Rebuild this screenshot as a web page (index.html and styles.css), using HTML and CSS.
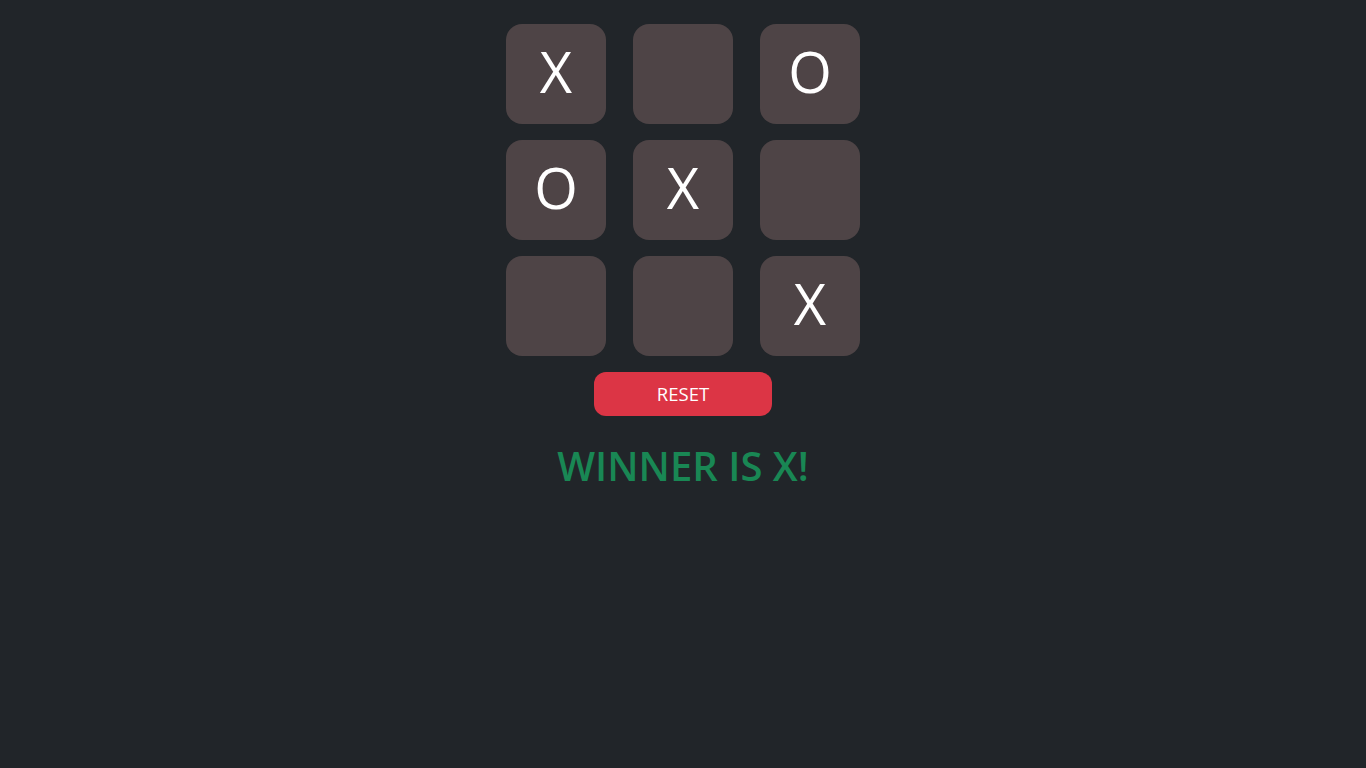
FILE: index.html
```html
<!DOCTYPE html>
<html>
<head>
<meta charset="utf-8">
<link rel="stylesheet" href="styles.css">
</head>
<body>
<main class="game">
  <div class="board">
    <div class="cell">X</div>
    <div class="cell"></div>
    <div class="cell">O</div>
    <div class="cell">O</div>
    <div class="cell">X</div>
    <div class="cell"></div>
    <div class="cell"></div>
    <div class="cell"></div>
    <div class="cell">X</div>
  </div>
  <button class="reset">RESET</button>
  <h2 class="status">WINNER IS X!</h2>
</main>
</body>
</html>
```
FILE: styles.css
```css
html, body {
  margin: 0;
  padding: 0;
  background: #212529;
  font-family: "Open Sans", "Noto Sans", sans-serif;
  height: 100%;
}
.game {
  display: flex;
  flex-direction: column;
  align-items: center;
  padding-top: 24px;
}
.board {
  display: grid;
  grid-template-columns: repeat(3, 100px);
  column-gap: 27px;
  row-gap: 16px;
}
.cell {
  box-sizing: border-box;
  width: 100px;
  height: 100px;
  padding-bottom: 6px;
  border-radius: 16px;
  background: #4e4446;
  color: #fff;
  font-size: 56px;
  display: flex;
  align-items: center;
  justify-content: center;
  line-height: 1;
}
.reset {
  margin-top: 16px;
  width: 178px;
  height: 44px;
  border: none;
  border-radius: 12px;
  background: #dc3545;
  color: #fff;
  font-family: inherit;
  font-size: 18.5px;
  padding: 0 0 1px;
}
.status {
  margin: 26px 0 0;
  color: #198754;
  font-size: 40px;
  font-weight: 600;
  line-height: 1.2;
}
```
